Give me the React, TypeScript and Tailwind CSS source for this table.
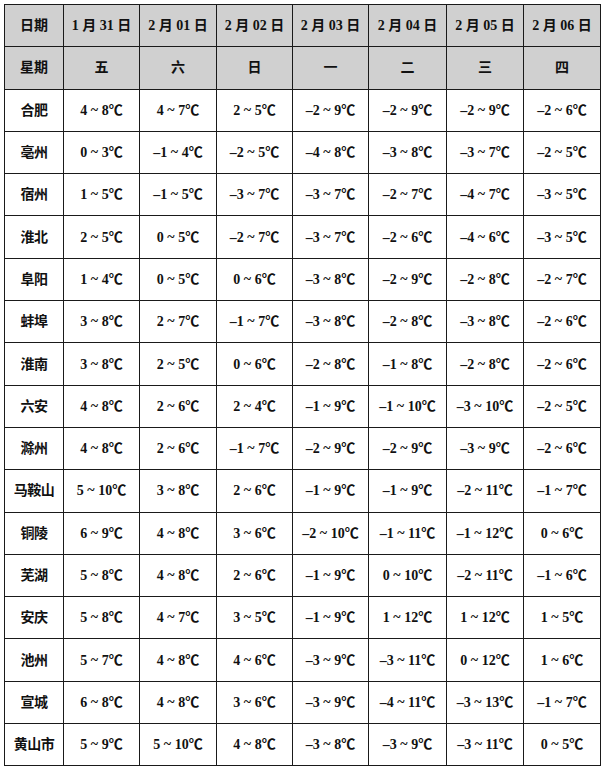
const dates = ["1 月 31 日", "2 月 01 日", "2 月 02 日", "2 月 03 日", "2 月 04 日", "2 月 05 日", "2 月 06 日"];
const weekdays = ["五", "六", "日", "一", "二", "三", "四"];

const rows: [string, string[]][] = [
  ["合肥", ["4 ~ 8", "4 ~ 7", "2 ~ 5", "–2 ~ 9", "–2 ~ 9", "–2 ~ 9", "–2 ~ 6"]],
  ["亳州", ["0 ~ 3", "–1 ~ 4", "–2 ~ 5", "–4 ~ 8", "–3 ~ 8", "–3 ~ 7", "–2 ~ 5"]],
  ["宿州", ["1 ~ 5", "–1 ~ 5", "–3 ~ 7", "–3 ~ 7", "–2 ~ 7", "–4 ~ 7", "–3 ~ 5"]],
  ["淮北", ["2 ~ 5", "0 ~ 5", "–2 ~ 7", "–3 ~ 7", "–2 ~ 6", "–4 ~ 6", "–3 ~ 5"]],
  ["阜阳", ["1 ~ 4", "0 ~ 5", "0 ~ 6", "–3 ~ 8", "–2 ~ 9", "–2 ~ 8", "–2 ~ 7"]],
  ["蚌埠", ["3 ~ 8", "2 ~ 7", "–1 ~ 7", "–3 ~ 8", "–2 ~ 8", "–3 ~ 8", "–2 ~ 6"]],
  ["淮南", ["3 ~ 8", "2 ~ 5", "0 ~ 6", "–2 ~ 8", "–1 ~ 8", "–2 ~ 8", "–2 ~ 6"]],
  ["六安", ["4 ~ 8", "2 ~ 6", "2 ~ 4", "–1 ~ 9", "–1 ~ 10", "–3 ~ 10", "–2 ~ 5"]],
  ["滁州", ["4 ~ 8", "2 ~ 6", "–1 ~ 7", "–2 ~ 9", "–2 ~ 9", "–3 ~ 9", "–2 ~ 6"]],
  ["马鞍山", ["5 ~ 10", "3 ~ 8", "2 ~ 6", "–1 ~ 9", "–1 ~ 9", "–2 ~ 11", "–1 ~ 7"]],
  ["铜陵", ["6 ~ 9", "4 ~ 8", "3 ~ 6", "–2 ~ 10", "–1 ~ 11", "–1 ~ 12", "0 ~ 6"]],
  ["芜湖", ["5 ~ 8", "4 ~ 8", "2 ~ 6", "–1 ~ 9", "0 ~ 10", "–2 ~ 11", "–1 ~ 6"]],
  ["安庆", ["5 ~ 8", "4 ~ 7", "3 ~ 5", "–1 ~ 9", "1 ~ 12", "1 ~ 12", "1 ~ 5"]],
  ["池州", ["5 ~ 7", "4 ~ 8", "4 ~ 6", "–3 ~ 9", "–3 ~ 11", "0 ~ 12", "1 ~ 6"]],
  ["宣城", ["6 ~ 8", "4 ~ 8", "3 ~ 6", "–3 ~ 9", "–4 ~ 11", "–3 ~ 13", "–1 ~ 7"]],
  ["黄山市", ["5 ~ 9", "5 ~ 10", "4 ~ 8", "–3 ~ 8", "–3 ~ 9", "–3 ~ 11", "0 ~ 5"]],
];

const widths = [59, 76, 77, 76, 76, 78, 77, 77];

const cell = "border border-[#1a1a1a] p-0 text-center align-middle";

export default function App() {
  return (
    <div className="min-h-[771px] bg-white pl-1 pt-1 font-['Liberation_Serif','Noto_Sans_CJK_SC',serif] text-[14px] font-bold text-[#111]">
      <table className="table-fixed border-collapse">
        <colgroup>
          {widths.map((w, i) => (
            <col key={i} style={{ width: w }} />
          ))}
        </colgroup>
        <tbody>
          <tr className="h-[42.3px] bg-[#d0d0d0]">
            <td className={cell}>日期</td>
            {dates.map((d) => (
              <td key={d} className={cell}>
                {d}
              </td>
            ))}
          </tr>
          <tr className="h-[42.3px] bg-[#d0d0d0]">
            <td className={cell}>星期</td>
            {weekdays.map((d) => (
              <td key={d} className={cell}>
                {d}
              </td>
            ))}
          </tr>
          {rows.map(([city, temps]) => (
            <tr key={city} className="h-[42.3px]">
              <td className={`${cell} tracking-[-0.5px]`}>{city}</td>
              {temps.map((t, i) => (
                <td key={i} className={cell}>
                  {t}℃
                </td>
              ))}
            </tr>
          ))}
        </tbody>
      </table>
    </div>
  );
}
